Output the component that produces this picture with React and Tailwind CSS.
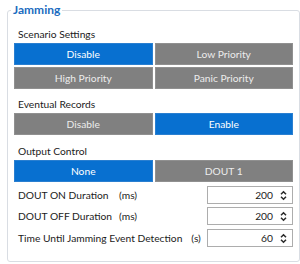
import React from 'react';

const Spin = () => (
    <svg width="7" height="11" viewBox="0 0 7 11" className="shrink-0">
        <path d="M1 4.3 L3.5 1.8 L6 4.3" fill="none" stroke="#2b2b2b" strokeWidth="1.5" />
        <path d="M1 6.7 L3.5 9.2 L6 6.7" fill="none" stroke="#2b2b2b" strokeWidth="1.5" />
    </svg>
);

const Btn = ({ active, children }) => (
    <div
        className={
            active
                ? 'h-[22px] flex items-center justify-center bg-[#0870d0] border border-[#2a7fd0] text-white'
                : 'h-[22px] flex items-center justify-center bg-[#808080] border border-[#909090] text-[#ececec]'
        }
    >
        {children}
    </div>
);

const NumBox = ({ value }) => (
    <div className="shrink-0 w-[86px] h-[18px] border border-[#adadad] bg-white flex items-center justify-end pr-[5px] gap-[7px]">
        <span className="text-[#1a1a1a]">{value}</span>
        <Spin />
    </div>
);

const Label = ({ children, mt }) => (
    <div className={`h-[20px] flex items-center pt-[3px] pl-[4px] ${mt}`}>{children}</div>
);

export default function App() {
    return (
        <div className="w-[300px] h-[264px] bg-white text-[10.25px] leading-none text-[#1b1b1b] font-['Lato',sans-serif] pt-[4px]">
            <fieldset className="ml-[7px] w-[290px] h-[258px] border border-[#d9dde3] rounded-[3px] px-[6px] pb-0 m-0">
                <legend className="ml-[-3px] px-[2px] font-bold text-[12px] text-[#1b6cc0]">Jamming</legend>

                {/* Scenario Settings */}
                <Label mt="mt-[7px]">Scenario Settings</Label>
                <div className="grid grid-cols-2 gap-[2px] w-[279px]">
                    <Btn active>Disable</Btn>
                    <Btn>Low Priority</Btn>
                    <Btn>High Priority</Btn>
                    <Btn>Panic Priority</Btn>
                </div>

                {/* Eventual Records */}
                <Label mt="mt-[4px]">Eventual Records</Label>
                <div className="grid grid-cols-2 gap-[2px] w-[279px]">
                    <Btn>Disable</Btn>
                    <Btn active>Enable</Btn>
                </div>

                {/* Output Control */}
                <Label mt="mt-[5px]">Output Control</Label>
                <div className="grid grid-cols-2 gap-[2px] w-[279px]">
                    <Btn active>None</Btn>
                    <Btn>DOUT 1</Btn>
                </div>

                {/* Durations */}
                <div className="grid grid-cols-[max-content_max-content_1fr] items-center gap-x-[7px] pl-[4px] mt-[4px] w-[279px]">
                    <span>DOUT ON Duration</span>
                    <span>(ms)</span>
                    <div className="justify-self-end"><NumBox value="200" /></div>
                    <span className="mt-[3px]">DOUT OFF Duration</span>
                    <span className="mt-[3px]">(ms)</span>
                    <div className="justify-self-end mt-[3px]"><NumBox value="200" /></div>
                </div>
                <div className="flex items-center pl-[4px] mt-[4px] w-[279px]">
                    <span>Time Until Jamming Event Detection</span>
                    <span className="ml-[9px]">(s)</span>
                    <div className="ml-auto"><NumBox value="60" /></div>
                </div>
            </fieldset>
        </div>
    );
}
